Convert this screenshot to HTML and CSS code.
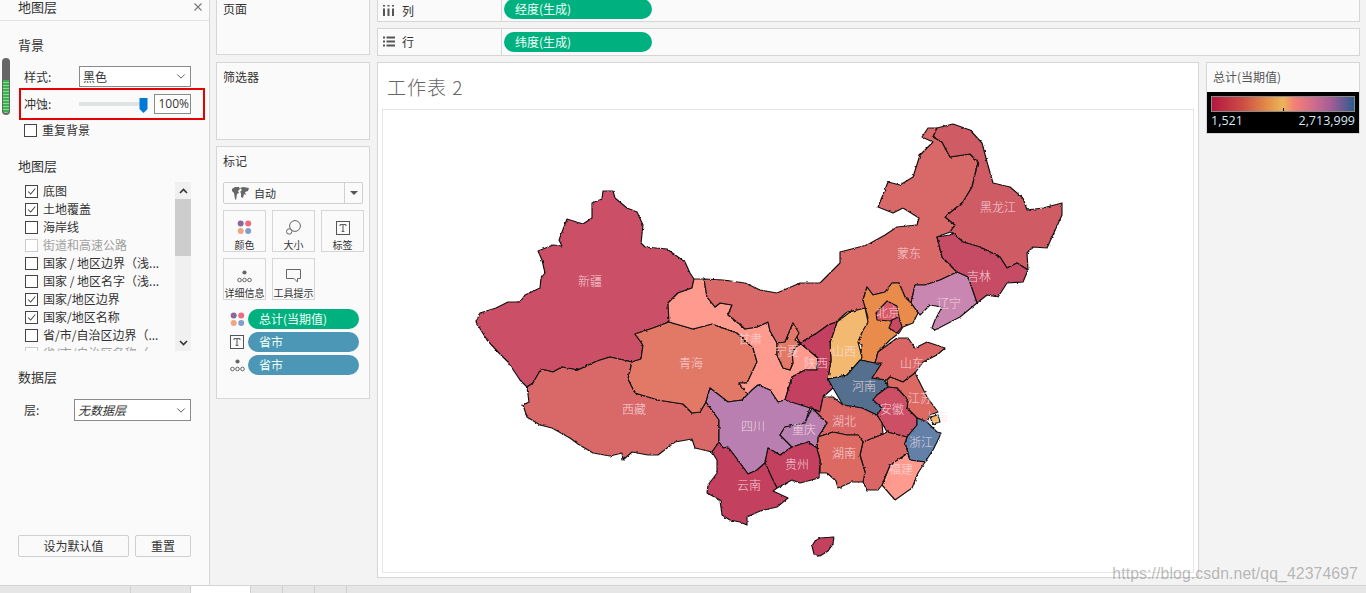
FILE: index.html
```html
<!DOCTYPE html>
<html lang="zh">
<head>
<meta charset="utf-8">
<title>工作表 2</title>
<link rel="stylesheet" href="styles.css">
</head>
<body>
<svg class="defs" width="0" height="0" aria-hidden="true">
  <symbol id="i-check" viewBox="0 0 13 13"><path d="M2.5 6.500 5.500 9.500 11 3" fill="none" stroke="#444" stroke-width="1.2"/></symbol>
  <symbol id="i-chev" viewBox="0 0 12 8"><path d="M1.500 1.500 6 6 10.500 1.500" fill="none" stroke="#555" stroke-width="1.1"/></symbol>
  <symbol id="i-dots" viewBox="0 0 15 15"><circle cx="3.700" cy="3.500" r="3" fill="#85699a"/><circle cx="11.200" cy="3.500" r="3" fill="#f0697f"/><circle cx="3.700" cy="11" r="3" fill="#f0a57f"/><circle cx="11.200" cy="11" r="3" fill="#7f9fcb"/></symbol>
  <symbol id="i-text" viewBox="0 0 14 14"><rect x=".5" y=".5" width="13" height="13" fill="none" stroke="#555"/><path d="M4 5V3.600H10V5M7 3.600V10.400M5.600 10.400H8.400" fill="none" stroke="#555"/></symbol>
  <symbol id="i-detail" viewBox="0 0 15 13"><circle cx="7.500" cy="2.500" r="2.100" fill="#666"/><circle cx="2.500" cy="10" r="1.800" fill="none" stroke="#666"/><circle cx="7.500" cy="10" r="1.800" fill="none" stroke="#666"/><circle cx="12.500" cy="10" r="1.800" fill="none" stroke="#666"/></symbol>
  <filter id="rough" filterUnits="userSpaceOnUse" x="383" y="110" width="811" height="462">
    <feTurbulence type="fractalNoise" baseFrequency="0.3" numOctaves="2" seed="4"/>
    <feDisplacementMap in="SourceGraphic" scale="2.400" xChannelSelector="R" yChannelSelector="G"/>
  </filter>
</svg>

<div class="app">
  <div class="workspace">
    <aside class="layers">
      <header class="layers-head"><span>地图层</span><svg class="close" width="8" height="8" viewBox="0 0 8 8"><path d="M.5.5 7.500 7.500M7.500.5 .5 7.500" stroke="#777" stroke-width="1.1" fill="none"/></svg></header>
      <section class="sec">
        <h3 class="sec-title first">背景</h3>
        <div class="row style-row">
          <label class="row-label">样式:</label>
          <div class="select">黑色<svg class="chev"><use href="#i-chev"/></svg></div>
        </div>
        <div class="row wash-row">
          <label class="row-label">冲蚀:</label>
          <svg class="slider" width="69" height="20" viewBox="0 0 69 20"><rect x="0" y="8" width="62" height="4" fill="#dfe3e3"/><path d="M60.500 4H68.500V15L64.500 19 60.500 15Z" fill="#0078d7"/></svg>
          <div class="percent">100%</div>
        </div>
        <div class="check-row repeat"><span class="box"></span><span>重复背景</span></div>
      </section>

      <section class="sec">
        <h3 class="sec-title map-title">地图层</h3>
        <div class="list">
          <div class="list-items">
            <div class="check-row"><span class="box"><svg><use href="#i-check"/></svg></span><span>底图</span></div>
            <div class="check-row"><span class="box"><svg><use href="#i-check"/></svg></span><span>土地覆盖</span></div>
            <div class="check-row"><span class="box"></span><span>海岸线</span></div>
            <div class="check-row off"><span class="box"></span><span>街道和高速公路</span></div>
            <div class="check-row"><span class="box"></span><span>国家 / 地区边界（浅...</span></div>
            <div class="check-row"><span class="box"></span><span>国家 / 地区名字（浅...</span></div>
            <div class="check-row"><span class="box"><svg><use href="#i-check"/></svg></span><span>国家/地区边界</span></div>
            <div class="check-row"><span class="box"><svg><use href="#i-check"/></svg></span><span>国家/地区名称</span></div>
            <div class="check-row"><span class="box"></span><span>省/市/自治区边界（...</span></div>
            <div class="check-row off"><span class="box"></span><span>省/市/自治区名称（...</span></div>
          </div>
          <div class="scroll">
            <div class="scroll-btn"><svg class="arrow" width="9" height="6" viewBox="0 0 9 6"><path d="M1 5 4.500 1.500 8 5" fill="none" stroke="#333" stroke-width="1.6"/></svg></div>
            <div class="scroll-track"><div class="scroll-thumb"></div></div>
            <div class="scroll-btn"><svg class="arrow" width="9" height="6" viewBox="0 0 9 6"><path d="M1 1 4.500 4.500 8 1" fill="none" stroke="#333" stroke-width="1.6"/></svg></div>
          </div>
        </div>
      </section>

      <section class="sec">
        <h3 class="sec-title data-title">数据层</h3>
        <div class="row layer-row">
          <label class="row-label">层:</label>
          <div class="select italic">无数据层<svg class="chev"><use href="#i-chev"/></svg></div>
        </div>
      </section>

      <div class="actions">
        <button class="btn wide">设为默认值</button>
        <button class="btn">重置</button>
      </div>

      <div class="gauge"><div class="gauge-fill"></div></div>
      <div class="highlight"></div>
    </aside>

    <div class="cards">
      <div class="card pages"><div class="card-title">页面</div></div>
      <div class="card filters"><div class="card-title">筛选器</div></div>
      <div class="card marks">
        <div class="card-title marks-title">标记</div>
        <div class="mark-type">
          <svg class="world" width="17" height="13" viewBox="0 0 17 13"><path d="M0 2 3 0H7L8 2 6 4 7 6 5 7 4 13 3 12 2 6 0 4ZM8 1 11 0 17 1 16 4 13 5 14 8 12 7 11 11 9 10 9 6 8 5 10 3Z" fill="#666"/></svg>
          <span class="mark-name">自动</span>
          <span class="mark-drop"><svg width="8" height="4" viewBox="0 0 8 4"><path d="M0 0H8L4 4Z" fill="#555"/></svg></span>
        </div>
        <div class="mark-grid">
          <div class="mark-btn"><svg width="15" height="15"><use href="#i-dots"/></svg><span>颜色</span></div>
          <div class="mark-btn"><svg width="15" height="15" viewBox="0 0 15 15"><circle cx="9" cy="6" r="5.400" fill="none" stroke="#666"/><circle cx="3.200" cy="11.500" r="2.700" fill="#fafafa" stroke="#666"/></svg><span>大小</span></div>
          <div class="mark-btn"><svg width="14" height="14"><use href="#i-text"/></svg><span>标签</span></div>
          <div class="mark-btn"><svg width="15" height="13"><use href="#i-detail"/></svg><span>详细信息</span></div>
          <div class="mark-btn"><svg width="15" height="14" viewBox="0 0 15 14"><path d="M.5.5H14.500V9.500H11.500V13L8 9.500H.5Z" fill="none" stroke="#666"/></svg><span>工具提示</span></div>
        </div>
        <div class="encoding"><svg width="15" height="15"><use href="#i-dots"/></svg><div class="pill green">总计(当期值)</div></div>
        <div class="encoding"><svg width="14" height="14"><use href="#i-text"/></svg><div class="pill blue">省市</div></div>
        <div class="encoding"><svg width="15" height="13"><use href="#i-detail"/></svg><div class="pill blue">省市</div></div>
      </div>
    </div>

    <main class="main">
      <div class="shelf shelf-col">
        <div class="shelf-label"><svg width="12" height="11" viewBox="0 0 12 11"><path d="M1 0V1.500M1 3.500V11M5.500 0V1.500M5.500 3.500V11M10 0V1.500M10 3.500V11" stroke="#555" stroke-width="2" fill="none"/></svg><span>列</span></div>
        <div class="shelf-body"><div class="pill green wide-pill">经度(生成)</div></div>
      </div>
      <div class="shelf shelf-row">
        <div class="shelf-label"><svg width="12" height="11" viewBox="0 0 12 11"><path d="M0 1.500H2M3.500 1.500H12M0 5.500H2M3.500 5.500H12M0 9.500H2M3.500 9.500H12" stroke="#555" stroke-width="2" fill="none"/></svg><span>行</span></div>
        <div class="shelf-body"><div class="pill green wide-pill">纬度(生成)</div></div>
      </div>
      <div class="stage">
        <div class="sheet">
          <h1 class="sheet-title">工作表 2</h1>
          <div class="view">
            <svg class="map" viewBox="383 110 811 462">
              <g filter="url(#rough)" stroke="#111" stroke-width="1.150" stroke-linejoin="round">
                <polygon fill="#cb5066" points="476,322 480,313 496,308 508,302 520,302 525,295 540,288 541,278 545,273 542,260 538,251 553,245 562,246 559,240 567,219 583,224 592,218 592,203 602,199 603,191 613,191 615,198 627,208 637,212 643,225 641,243 645,247 667,249 685,262 690,273 694,279 692,288 678,293 668,303 669,322 653,328 635,334 643,345 641,359 632,362 610,357 597,361 578,370 562,367 553,372 541,369 533,383 527,387 520,380 508,362 498,352 487,340"/>
                <polygon fill="#d96868" points="527,387 533,383 541,369 553,372 562,367 578,370 597,361 610,357 632,362 628,379 635,393 658,400 683,404 692,413 700,412 706,402 719,420 719,442 712,452 695,448 692,439 675,442 658,455 648,455 632,452 623,460 622,453 610,456 593,453 578,444 570,438 552,428 540,425 527,417 523,405 529,402"/>
                <polygon fill="#e27866" points="635,334 653,328 669,322 693,329 712,324 737,333 753,348 757,362 747,383 739,383 748,395 742,400 728,402 710,388 706,402 700,412 692,413 683,404 658,400 635,393 628,379 632,362 641,359 643,345"/>
                <polygon fill="#ff9b8e" points="694,279 704,279 707,297 715,307 720,303 732,305 728,315 737,322 745,329 757,327 768,322 770,331 777,343 777,355 783,368 790,370 793,363 792,355 785,342 795,333 800,343 818,358 817,370 805,370 792,377 785,400 778,402 770,390 758,385 752,390 748,395 739,383 747,383 757,362 753,348 737,333 712,324 693,329 669,322 668,303 678,293 692,288"/>
                <polygon fill="#d96868" points="704,279 723,280 745,283 760,290 777,293 800,283 820,283 840,263 840,252 867,245 885,235 897,227 917,225 919,218 903,208 893,213 878,207 888,182 900,185 913,177 920,155 933,142 922,137 928,128 937,128 933,137 942,142 950,157 970,154 978,162 972,187 963,202 945,217 955,225 950,232 937,237 942,257 957,272 940,280 925,285 915,285 911,303 905,297 899,283 892,283 885,292 873,295 867,287 863,300 867,308 847,312 836,322 828,325 817,333 800,343 795,333 793,323 785,342 777,343 770,331 768,322 757,327 745,329 737,322 728,315 732,305 720,303 715,307 707,297"/>
                <polygon fill="#cf5b65" points="937,128 953,124 970,130 982,143 987,162 993,183 1010,187 1023,198 1027,210 1043,208 1062,203 1062,215 1047,248 1033,247 1027,253 1028,270 1017,263 1007,268 1000,257 980,247 963,242 953,233 950,232 955,225 945,217 963,202 972,187 978,162 970,154 950,157 942,142 933,137"/>
                <polygon fill="#c64c65" points="937,237 950,235 953,233 963,242 980,247 1000,257 1007,268 1017,263 1028,270 1023,282 1007,283 998,297 987,295 977,303 968,277 957,272 942,257"/>
                <polygon fill="#c986b0" points="957,272 968,277 977,303 960,317 935,330 932,328 935,320 942,307 930,305 920,315 911,303 915,285 925,285 940,280"/>
                <polygon fill="#e88b4b" points="867,287 873,295 885,292 892,283 899,283 905,297 911,303 918,313 913,323 903,327 899,333 890,340 878,352 875,363 860,360 862,345 858,342 862,332 868,318 863,300"/>
                <polygon fill="#d85a68" points="876,313 887,301 897,306 899,317 890,321 877,320"/>
                <polygon fill="#c84a64" points="892,320 899,317 902,327 897,333 889,328"/>
                <polygon fill="#f4b96f" points="837,322 850,312 865,308 868,322 862,332 858,342 862,357 860,363 847,375 828,379 831,360 830,343"/>
                <polygon fill="#c43f60" points="837,322 830,343 831,360 828,379 833,388 823,397 820,412 810,408 788,402 785,400 792,377 805,370 817,370 818,358 800,343 817,333 828,325"/>
                <polygon fill="#e27866" points="793,323 799,333 795,340 800,343 792,352 793,363 790,370 783,368 777,355 777,343 785,342"/>
                <polygon fill="#54708f" points="860,360 875,363 882,363 872,378 885,380 888,387 877,395 873,400 882,408 877,415 862,408 843,405 833,388 828,379 847,375"/>
                <polygon fill="#d96565" points="875,363 878,352 897,338 908,338 915,348 927,342 945,348 937,355 923,362 915,373 903,382 890,377 887,380 872,378 882,363"/>
                <polygon fill="#dc6a62" points="890,377 903,382 915,373 927,397 938,412 930,415 927,422 917,418 907,408 908,400 897,388 888,387 887,380"/>
                <polygon fill="#cc5066" points="888,387 897,388 908,400 907,408 917,418 917,425 907,437 887,432 882,423 877,415 882,408 873,400 877,395"/>
                <polygon fill="#f4b96f" points="930,417 938,415 940,422 933,424"/>
                <polygon fill="#6480a8" points="917,418 927,422 937,432 941,433 938,440 933,450 925,462 910,460 905,443 907,437 917,425"/>
                <polygon fill="#ff9b8e" points="907,453 910,460 925,462 918,473 912,488 895,500 882,485 890,465"/>
                <polygon fill="#d96565" points="863,442 883,434 887,432 907,437 905,443 908,453 890,465 882,485 878,490 867,490 863,482 865,472 860,455"/>
                <polygon fill="#d96565" points="820,412 823,397 833,397 843,405 862,408 877,415 882,423 883,434 863,442 858,435 847,435 833,432 818,437 827,423 812,408"/>
                <polygon fill="#dc6a62" points="818,437 833,432 847,435 858,435 863,442 860,455 865,472 863,482 852,482 838,488 836,481 827,473 820,473 820,460 817,448"/>
                <polygon fill="#b87fb0" points="706,402 710,388 728,402 742,400 752,390 758,385 770,390 778,402 785,400 810,408 805,423 785,427 780,435 792,447 780,455 768,448 765,463 757,470 748,474 740,463 728,447 723,448 719,442 719,420"/>
                <polygon fill="#b87fb0" points="812,408 827,423 818,437 817,448 808,442 792,447 780,435 785,427 805,423"/>
                <polygon fill="#c4405f" points="765,463 768,448 780,455 792,447 808,442 817,448 820,460 819,478 800,483 792,480 777,488 772,478"/>
                <polygon fill="#c4405f" points="712,452 719,442 723,448 728,447 740,463 748,474 757,470 765,463 772,478 777,488 773,491 788,498 777,507 760,511 747,517 747,525 740,522 730,520 722,515 720,500 707,493 708,485 717,473 717,460"/>
                <polygon fill="#c4405f" points="812,546 815,541 820,538 834,537 833,544 828,551 820,556 814,554"/>
              </g>
              <g class="map-labels" text-anchor="middle">
                <text x="590" y="286">新疆</text><text x="998" y="212">黑龙江</text><text x="909" y="258">蒙东</text>
                <text x="979" y="281">吉林</text><text x="949" y="308">辽宁</text><text x="888" y="317">北京</text>
                <text x="750" y="344">甘肃</text><text x="691" y="368">青海</text><text x="787" y="356">宁夏</text>
                <text x="816" y="368">陕西</text><text x="844" y="356">山西</text><text x="864" y="391">河南</text>
                <text x="912" y="368">山东</text><text x="634" y="414">西藏</text><text x="753" y="431">四川</text>
                <text x="804" y="434">重庆</text><text x="892" y="414">安徽</text><text x="920" y="403">江苏</text>
                <text x="936" y="422">上海</text><text x="844" y="426">湖北</text><text x="844" y="458">湖南</text>
                <text x="921" y="447">浙江</text><text x="797" y="469">贵州</text><text x="749" y="490">云南</text>
                <text x="901" y="474">福建</text>
              </g>
            </svg>
          </div>
        </div>
        <div class="legend">
          <div class="legend-title">总计(当期值)</div>
          <div class="legend-body">
            <div class="ramp"><span class="ramp-tick"></span></div>
            <div class="legend-range"><span>1,521</span><span>2,713,999</span></div>
          </div>
        </div>
      </div>
    </main>
  </div>

  <footer class="tabs">
    <span class="tab t1"></span><span class="tab t2"></span><span class="tab active"></span><span class="tab t3"></span><span class="tab t3"></span><span class="tab t3"></span>
  </footer>
  <div class="watermark">https://blog.csdn.net/qq_42374697</div>
</div>
</body>
</html>
```

FILE: styles.css
```css
* { box-sizing: border-box; }
html, body { margin: 0; padding: 0; height: 593px; overflow: hidden; }
body {
  font-family: "Noto Sans CJK SC", "Open Sans", "Liberation Sans", sans-serif;
  font-size: 12px;
  line-height: 16px;
  color: #333;
  background: #f3f3f3;
}
.defs { position: absolute; }
.app { position: relative; height: 593px; display: flex; flex-direction: column; }
.workspace { height: 585px; display: flex; }

/* left panel */
.layers {
  position: relative;
  width: 210px;
  flex: none;
  display: flex;
  flex-direction: column;
  background: #fafafa;
  border-right: 1px solid #d6d6d6;
  padding-bottom: 28px;
}
.layers-head {
  height: 21px;
  padding: 0 7px 0 18px;
  display: flex;
  justify-content: space-between;
  border-bottom: 1px solid #e3e3e3;
  line-height: 14px;
  font-size: 13px;
}
.close { margin-top: 3px; flex: none; }
.sec { padding: 0 18px; }
.sec-title { margin: 0; font-size: 13px; font-weight: 400; line-height: 16px; }
.sec-title.first { margin-top: 16px; }
.map-title { margin-top: 20px; }
.data-title { margin-top: 18px; }
.row { display: flex; align-items: center; padding-left: 6px; }
.row-label { flex: none; width: 55px; }
.style-row { height: 21px; margin-top: 13px; }
.wash-row { height: 20px; margin-top: 7px; }
.layer-row { height: 22px; margin-top: 14px; }
.layer-row .row-label { width: 50px; }
.select {
  flex: 1;
  height: 100%;
  display: flex;
  align-items: center;
  justify-content: space-between;
  background: #fff;
  border: 1px solid #8a8a8a;
  padding: 0 4px 0 3px;
  line-height: 16px;
}
.italic { font-style: italic; }
.chev { width: 10px; height: 7px; flex: none; }
.slider { flex: none; }
.percent {
  flex: 1;
  height: 100%;
  margin-left: 6px;
  background: #fff;
  border: 1px solid #8a8a8a;
  text-align: right;
  padding-right: 1px;
  line-height: 18px;
  font-family: "Open Sans", "Noto Sans CJK SC", sans-serif;
}
.check-row { display: flex; align-items: center; height: 18px; white-space: nowrap; }
.repeat { height: 16px; margin-top: 8px; padding-left: 6px; }
.box {
  flex: none;
  width: 13px;
  height: 13px;
  margin-right: 5px;
  background: #fff;
  border: 1px solid #444;
  display: flex;
}
.box svg { width: 11px; height: 11px; }
.off { color: #a0a0a0; }
.off .box { border-color: #ccc; }
.list { height: 169px; margin: 8px 0 0 6px; display: flex; overflow: hidden; }
.list-items { flex: 1; padding-left: 1px; min-width: 0; }
.scroll { width: 16px; flex: none; display: flex; flex-direction: column; background: #f0f0f0; }
.scroll-btn { height: 17px; flex: none; display: flex; align-items: center; justify-content: center; }
.scroll-track { flex: 1; }
.scroll-thumb { height: 57px; background: #cdcdcd; }
.actions { margin-top: auto; padding: 0 18px; display: flex; gap: 6px; }
.btn {
  flex: 1;
  height: 22px;
  font: inherit;
  line-height: 16px;
  color: #333;
  padding: 0;
  background: #fafafa;
  border: 1px solid #cfcfcf;
  border-radius: 2px;
}
.btn.wide { flex: none; width: 111px; }
.gauge {
  position: absolute;
  left: 2px;
  top: 58px;
  width: 8px;
  height: 57px;
  border-radius: 4px;
  background: #666;
  padding: 22px 1px 2px;
}
.gauge-fill {
  height: 100%;
  border-radius: 0 0 3px 3px;
  background: repeating-linear-gradient(#37b34a 0 2px, #8fd99a 2px 3px);
}
.highlight {
  position: absolute;
  left: 19px;
  top: 88px;
  width: 186px;
  height: 32px;
  border: 2px solid #e60000;
}

/* middle column */
.cards { width: 154px; flex: none; margin: -1px 7px 0 6px; display: flex; flex-direction: column; gap: 6px; }
.card { background: #fafafa; border: 1px solid #d6d6d6; }
.card-title { padding: 1px 0 0 6px; line-height: 16px; }
.pages { height: 56px; margin-bottom: 1px; }
.filters { height: 78px; }
.filters .card-title { padding-top: 6px; }
.marks { height: 253px; padding: 0 6px; }
.marks-title { padding: 6px 0 0; }
.mark-type {
  height: 22px;
  margin-top: 13px;
  display: flex;
  align-items: center;
  background: #fafafa;
  border: 1px solid #d0d0d0;
  border-radius: 2px;
  font-size: 11px;
}
.world { margin-left: 8px; flex: none; }
.mark-name { flex: 1; margin-left: 5px; }
.mark-drop { width: 18px; height: 100%; border-left: 1px solid #d0d0d0; display: flex; align-items: center; justify-content: center; }
.mark-grid { margin-top: 6px; display: grid; grid-template-columns: repeat(3, 43px); grid-auto-rows: 42px; column-gap: 6px; row-gap: 6px; }
.mark-btn {
  border: 1px solid #d6d6d6;
  display: flex;
  flex-direction: column;
  align-items: center;
  justify-content: flex-end;
  gap: 3px;
  font-size: 10px;
  line-height: 13px;
  white-space: nowrap;
  background: #fafafa;
}
.encoding { height: 20px; margin-top: 3px; display: flex; align-items: center; }
.mark-grid + .encoding { margin-top: 9px; }
.encoding svg { flex: none; margin-left: 7px; }
.encoding .pill { margin-left: auto; margin-right: 4px; width: 111px; }
.pill {
  height: 20px;
  border-radius: 10px;
  color: #f0fff8;
  padding-left: 11px;
  line-height: 19px;
  white-space: nowrap;
}
.green { background: #00b180; }
.blue { background: #4b97b5; }

/* right side */
.main { width: 983px; flex: none; margin-top: -1px; display: flex; flex-direction: column; }
.shelf { display: flex; background: #fafafa; border: 1px solid #d6d6d6; }
.shelf-col { height: 23px; }
.shelf-row { height: 28px; margin-top: 6px; }
.shelf-label { width: 124px; flex: none; padding-left: 5px; display: flex; align-items: center; gap: 7px; border-right: 1px solid #d6d6d6; line-height: 15px; }
.shelf-row .shelf-label { padding-bottom: 2px; }
.shelf-body { flex: 1; padding-left: 2px; display: flex; align-items: center; }
.wide-pill { width: 148px; }
.shelf-col .wide-pill { margin-top: -3px; }
.stage { margin-top: 6px; display: flex; gap: 7px; align-items: flex-start; }
.sheet { width: 822px; height: 516px; flex: none; background: #fff; border: 1px solid #d6d6d6; padding: 0 4px; }
.sheet-title {
  margin: 0;
  height: 46px;
  padding: 12px 0 0 5px;
  font-size: 19px;
  font-weight: 300;
  line-height: 24px;
  letter-spacing: 1px;
  color: #666;
}
.view { height: 464px; border: 1px solid #e6e6e6; background: #fff; }
.map { display: block; width: 811px; height: 462px; }
.map-labels text {
  font-family: "Noto Sans CJK SC", sans-serif;
  font-size: 12px;
  font-weight: 300;
  fill: #fbe3e8;
  fill-opacity: .88;
}
.legend { width: 154px; flex: none; background: #fafafa; border: 1px solid #d6d6d6; }
.legend-title { height: 29px; padding: 6px 0 0 6px; line-height: 16px; color: #555; }
.legend-body { background: #000; height: 41px; padding: 4px 4px 0; }
.ramp {
  position: relative;
  height: 16px;
  border: 1px solid #8a8a8a;
  background: linear-gradient(90deg, #b5183f, #cd4e45 22%, #e08a47 38%, #ecb55a 50%, #f47f75 58%, #cf6b8e 72%, #a25d95 84%, #2f5b8f);
}
.ramp-tick { position: absolute; left: 71px; bottom: 0; width: 1px; height: 3px; background: #000; }
.legend-range {
  display: flex;
  justify-content: space-between;
  color: #d8e8f5;
  font-family: "Open Sans", sans-serif;
  font-size: 12.5px;
  line-height: 18px;
}

/* bottom strip */
.tabs { height: 8px; display: flex; background: #e6e6e6; border-top: 1px solid #d4d4d4; }
.tab { height: 100%; border-right: 1px solid #cfcfcf; }
.t1 { width: 131px; }
.t2 { width: 60px; }
.t3 { width: 32px; }
.active { width: 60px; background: #fff; }
.watermark {
  position: absolute;
  right: 8px;
  top: 564px;
  color: rgba(130, 130, 130, .55);
  font-family: "Liberation Sans", sans-serif;
  font-size: 15.8px;
  line-height: 20px;
  letter-spacing: .1px;
}
```
